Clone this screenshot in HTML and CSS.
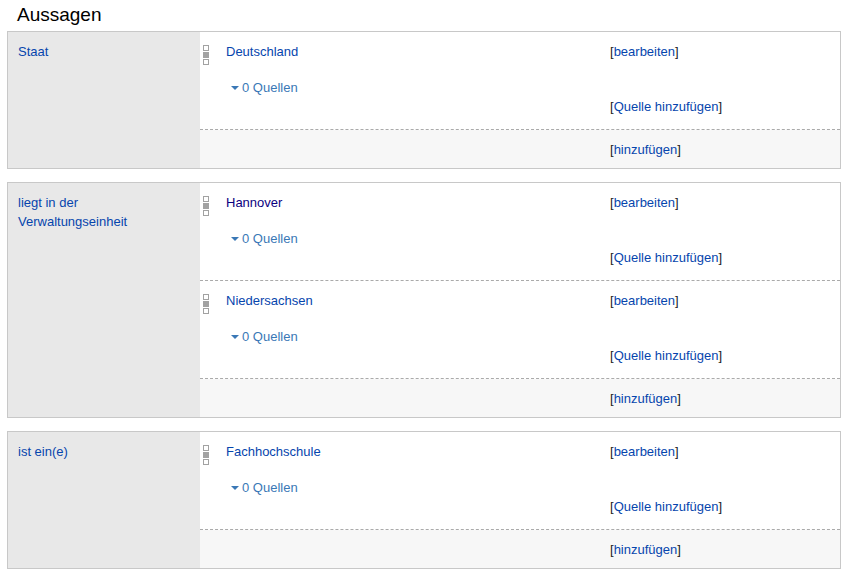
FILE: index.html
```html
<!DOCTYPE html>
<html lang="de">
<head>
<meta charset="utf-8">
<title>Aussagen</title>
<link rel="stylesheet" href="styles.css">
</head>
<body>
<div class="page">
  <h2 class="title">Aussagen</h2>

  <div class="group">
    <div class="label"><a href="#">Staat</a></div>
    <div class="claims">
      <div class="claim">
        <div class="rank"><svg width="7" height="20" viewBox="0 0 7 20"><rect x="0.5" y="0.5" width="5" height="5" fill="#fff" stroke="#a2a2a2"/><rect x="0" y="7" width="6" height="6" fill="#a2a2a2"/><rect x="0.5" y="14.5" width="5" height="5" fill="#fff" stroke="#a2a2a2"/></svg></div>
        <div class="value"><a href="#">Deutschland</a></div>
        <div class="tb">[<a href="#">bearbeiten</a>]</div>
        <div class="refs"><span class="tri"></span>0 Quellen</div>
        <div class="tb reftb">[<a href="#">Quelle hinzufügen</a>]</div>
      </div>
      <div class="footer">[<a href="#">hinzufügen</a>]</div>
    </div>
  </div>

  <div class="group">
    <div class="label"><a href="#">liegt in der Verwaltungseinheit</a></div>
    <div class="claims">
      <div class="claim">
        <div class="rank"><svg width="7" height="20" viewBox="0 0 7 20"><rect x="0.5" y="0.5" width="5" height="5" fill="#fff" stroke="#a2a2a2"/><rect x="0" y="7" width="6" height="6" fill="#a2a2a2"/><rect x="0.5" y="14.5" width="5" height="5" fill="#fff" stroke="#a2a2a2"/></svg></div>
        <div class="value"><a href="#" class="visited">Hannover</a></div>
        <div class="tb">[<a href="#">bearbeiten</a>]</div>
        <div class="refs"><span class="tri"></span>0 Quellen</div>
        <div class="tb reftb">[<a href="#">Quelle hinzufügen</a>]</div>
      </div>
      <div class="claim">
        <div class="rank"><svg width="7" height="20" viewBox="0 0 7 20"><rect x="0.5" y="0.5" width="5" height="5" fill="#fff" stroke="#a2a2a2"/><rect x="0" y="7" width="6" height="6" fill="#a2a2a2"/><rect x="0.5" y="14.5" width="5" height="5" fill="#fff" stroke="#a2a2a2"/></svg></div>
        <div class="value"><a href="#">Niedersachsen</a></div>
        <div class="tb">[<a href="#">bearbeiten</a>]</div>
        <div class="refs"><span class="tri"></span>0 Quellen</div>
        <div class="tb reftb">[<a href="#">Quelle hinzufügen</a>]</div>
      </div>
      <div class="footer">[<a href="#">hinzufügen</a>]</div>
    </div>
  </div>

  <div class="group">
    <div class="label"><a href="#">ist ein(e)</a></div>
    <div class="claims">
      <div class="claim">
        <div class="rank"><svg width="7" height="20" viewBox="0 0 7 20"><rect x="0.5" y="0.5" width="5" height="5" fill="#fff" stroke="#a2a2a2"/><rect x="0" y="7" width="6" height="6" fill="#a2a2a2"/><rect x="0.5" y="14.5" width="5" height="5" fill="#fff" stroke="#a2a2a2"/></svg></div>
        <div class="value"><a href="#">Fachhochschule</a></div>
        <div class="tb">[<a href="#">bearbeiten</a>]</div>
        <div class="refs"><span class="tri"></span>0 Quellen</div>
        <div class="tb reftb">[<a href="#">Quelle hinzufügen</a>]</div>
      </div>
      <div class="footer">[<a href="#">hinzufügen</a>]</div>
    </div>
  </div>
</div>
</body>
</html>
```

FILE: styles.css
```css
html, body {
  margin: 0;
  padding: 0;
  background: #fff;
}
body {
  font-family: "Liberation Sans", Arial, sans-serif;
  font-size: 13px;
  line-height: 19px;
  color: #000;
}
a {
  color: #0645ad;
  text-decoration: none;
}
a.visited {
  color: #0b0080;
}
.page {
  padding: 5px 14px 0 7px;
}
.title {
  margin: 0 0 7px 0;
  padding-left: 10px;
  font-size: 19px;
  line-height: 19px;
  font-weight: normal;
  color: #000;
}
.group {
  display: grid;
  grid-template-columns: 192px 1fr;
  border: 1px solid #c8c8c8;
  margin-bottom: 13px;
}
.label {
  background: #e8e8e8;
  padding: 10px 10px;
}
.claims {
  display: flex;
  flex-direction: column;
  background: #fff;
}
.claim {
  display: grid;
  grid-template-columns: 26px 384px 1fr;
  grid-template-rows: 19px auto auto;
  padding: 10px 0 13px 0;
  border-bottom: 1px dashed #aaa;
}
.rank {
  grid-row: 1;
  grid-column: 1;
  padding: 3px 0 0 3px;
}
.rank svg {
  display: block;
}
.value {
  grid-row: 1;
  grid-column: 2;
}
.tb {
  color: #222;
}
.claim > .tb:not(.reftb) {
  grid-row: 1;
  grid-column: 3;
}
.refs {
  grid-row: 2;
  grid-column: 2;
  margin-top: 17px;
  padding-left: 5px;
  color: #3a78b6;
  display: flex;
  align-items: center;
}
.tri {
  width: 0;
  height: 0;
  border-left: 4px solid transparent;
  border-right: 4px solid transparent;
  border-top: 4px solid #3a78b6;
  margin-right: 3px;
  margin-top: 1px;
}
.reftb {
  grid-row: 3;
  grid-column: 3;
  margin-top: 0;
}
.footer {
  flex: 1;
  background: #f7f7f7;
  padding: 10px 0 9px 410px;
  color: #222;
}
```
